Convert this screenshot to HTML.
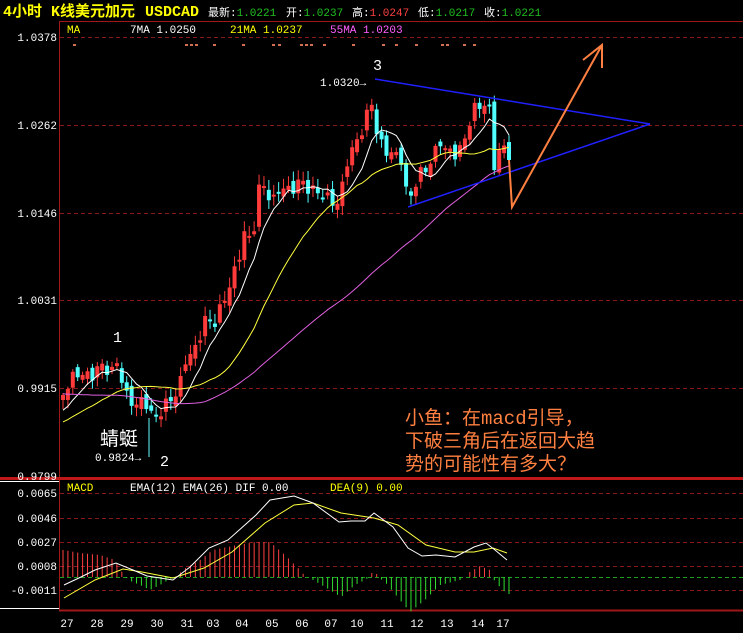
<!DOCTYPE html>
<html><head><meta charset="utf-8"><style>
html,body{margin:0;padding:0;background:#000;width:743px;height:633px;overflow:hidden}
svg{display:block}
text{font-family:"Liberation Mono","Noto Sans CJK SC",monospace}
</style></head><body>
<svg id="s" width="743" height="633" xmlns="http://www.w3.org/2000/svg">
<rect width="743" height="633" fill="#000"/>
<g id="grid"></g>
<line x1="59.5" y1="21" x2="59.5" y2="611" stroke="#a01818" stroke-width="1"/>
<line x1="59" y1="21.5" x2="743" y2="21.5" stroke="#a01818"/>
<line x1="0" y1="478.5" x2="743" y2="478.5" stroke="#c01818" stroke-width="3"/>
<line x1="59" y1="610.5" x2="743" y2="610.5" stroke="#a01818" stroke-width="2"/>
<line x1="0" y1="481.5" x2="59" y2="481.5" stroke="#fff"/>
<line x1="0" y1="608.5" x2="59" y2="608.5" stroke="#fff"/>
<g id="candles"></g>
<g id="ma"></g>
<g id="macd"></g>
<text x="3" y="16" font-family="Liberation Sans,Noto Sans CJK SC,sans-serif" font-size="15" font-weight="bold" fill="#ffff00">4小时 K线美元加元</text>
<text x="145" y="16" font-family="Liberation Sans,sans-serif" font-size="15" font-weight="bold" fill="#ffff00">USDCAD</text>
<g font-size="11">
<text x="208" y="16" fill="#fff">最新:<tspan fill="#20c020">1.0221</tspan></text>
<text x="286" y="16" fill="#fff">开:<tspan fill="#20c020">1.0237</tspan></text>
<text x="352" y="16" fill="#fff">高:<tspan fill="#ff4040">1.0247</tspan></text>
<text x="418" y="16" fill="#fff">低:<tspan fill="#20c020">1.0217</tspan></text>
<text x="484" y="16" fill="#fff">收:<tspan fill="#20c020">1.0221</tspan></text>
</g>
<g font-size="11">
<text x="67" y="33" fill="#ffff00">MA</text>
<text x="130" y="33" fill="#fff">7MA 1.0250</text>
<text x="230" y="33" fill="#ffff00">21MA 1.0237</text>
<text x="330" y="33" fill="#ff60ff">55MA 1.0203</text>
<text x="67" y="491" fill="#ffff00">MACD</text>
<text x="130" y="491" fill="#fff">EMA(12) EMA(26) DIF 0.00</text>
<text x="330" y="491" fill="#ffff00">DEA(9) 0.00</text>
</g>
<g font-size="11" fill="#fff" text-anchor="end">
<text x="57" y="41">1.0378</text><text x="57" y="129">1.0262</text><text x="57" y="217">1.0146</text>
<text x="57" y="304">1.0031</text><text x="57" y="392">0.9915</text><text x="57" y="480">0.9799</text>
<text x="57" y="497">0.0065</text><text x="57" y="522">0.0046</text><text x="57" y="546">0.0027</text>
<text x="57" y="570">0.0008</text><text x="57" y="594">-0.0011</text>
</g>
<g font-size="11" fill="#fff" text-anchor="middle">
<text x="67" y="627">27</text><text x="97" y="627">28</text><text x="127" y="627">29</text><text x="157" y="627">30</text>
<text x="187" y="627">31</text><text x="213" y="627">03</text><text x="242" y="627">04</text><text x="272" y="627">05</text>
<text x="302" y="627">06</text><text x="331" y="627">07</text><text x="357" y="627">10</text><text x="387" y="627">11</text>
<text x="417" y="627">12</text><text x="447" y="627">13</text><text x="478" y="627">14</text><text x="503" y="627">17</text>
</g>
<g fill="#fff">
<text x="113" y="342" font-family="Liberation Sans,sans-serif" font-size="15">1</text>
<text x="373" y="70" font-family="Liberation Sans,sans-serif" font-size="15">3</text>
<text x="160" y="466" font-family="Liberation Sans,sans-serif" font-size="15">2</text>
<text x="100" y="445" font-family="Noto Sans CJK SC,sans-serif" font-size="19">蜻蜓</text>
<text x="95" y="461" font-size="11">0.9824→</text>
<text x="320" y="86" font-size="11">1.0320→</text>
</g>
<line x1="149" y1="418" x2="149" y2="457" stroke="#60ffff"/>
<line x1="375" y1="79" x2="650" y2="124" stroke="#2020ff" stroke-width="1.5"/>
<line x1="408" y1="207" x2="650" y2="124" stroke="#2020ff" stroke-width="1.5"/>
<polyline points="509,160 512,207 602,45" fill="none" stroke="#ff8040" stroke-width="2"/>
<polyline points="583,60 602,45 602,68" fill="none" stroke="#ff8040" stroke-width="2"/>
<g font-family="Noto Sans CJK SC,sans-serif" font-size="19" fill="#ff8040">
<text x="405" y="424">小鱼：在macd引导，</text>
<text x="405" y="447">下破三角后在返回大趋</text>
<text x="405" y="470">势的可能性有多大？</text>
</g>
</svg>
<script>
(function(){
var NS="http://www.w3.org/2000/svg";
function el(p,t,a){var e=document.createElementNS(NS,t);for(var k in a)e.setAttribute(k,a[k]);document.getElementById(p).appendChild(e);return e;}
[37,125,213,300,388].forEach(function(y){el("grid","line",{x1:60,x2:743,y1:y+.5,y2:y+.5,stroke:"#8a1818","stroke-dasharray":"4,3"});});
[493,518,542,566,590].forEach(function(y){el("grid","line",{x1:60,x2:743,y1:y+.5,y2:y+.5,stroke:"#8a1818","stroke-dasharray":"4,3"});});
el("grid","line",{x1:60,x2:743,y1:577.5,y2:577.5,stroke:"#20a020","stroke-dasharray":"4,3"});
[73,185,190,195,213,242,272,278,300,305,310,323,352,382,395,415,441,446,463,473].forEach(function(x){el("grid","rect",{x:x,y:44,width:3,height:2,fill:"#d07050"});});
var K=[[63,395],[70,380],[80,372],[90,378],[100,365],[112,372],[118,360],[125,395],[135,405],[145,400],[150,412],[155,420],[165,405],[175,395],[180,385],[185,360],[195,350],[205,320],[215,322],[228,290],[237,265],[245,230],[252,245],[258,190],[265,185],[272,205],[280,185],[290,192],[300,180],[310,190],[318,192],[330,200],[340,205],[345,165],[355,145],[362,130],[367,115],[372,102],[378,140],[385,150],[395,155],[403,160],[407,200],[412,195],[418,175],[425,170],[432,160],[440,140],[445,150],[452,152],[458,155],[462,145],[468,130],[472,112],[478,105],[485,105],[490,112],[494,165],[500,150],[505,147],[509,160]];
function interp(L,x){if(x<=L[0][0])return L[0][1];for(var i=1;i<L.length;i++){if(x<=L[i][0]){var a=L[i-1],b=L[i];return a[1]+(b[1]-a[1])*(x-a[0])/(b[0]-a[0]);}}return L[L.length-1][1];}
var N=92,xs=[],cl=[];
for(var i=0;i<N;i++){var x=63+i*(446/91);xs.push(x);cl.push(interp(K,x)+Math.sin(i*2.3)*6);}
cl[N-1]=160;
var pre=[];for(var j=0;j<60;j++){pre.push(j<35?365:445-(j-35)*1.5);}
var all=pre.concat(cl);
for(var i=0;i<N;i++){
 var o=i==0?400:cl[i-1]+Math.sin(i*1.7)*5,c=cl[i],x=xs[i];
 var up=c<o,col=up?"#ff3a3a":"#50ffff";
 var t0=Math.min(o,c),b0=Math.max(o,c);if(b0-t0<2)b0=t0+2;
 var hw=2+Math.abs(Math.sin(i*3.1))*8,lw=2+Math.abs(Math.cos(i*2.7))*7;
 el("candles","line",{x1:x,x2:x,y1:t0-hw,y2:b0+lw,stroke:col});
 el("candles","rect",{x:x-2,y:t0,width:4,height:b0-t0,fill:col});
}
function ma(n,color){var pts=[];for(var i=0;i<N;i++){var k=i+60,s=0;for(var m=0;m<n;m++)s+=all[k-m];pts.push(xs[i].toFixed(1)+","+(s/n).toFixed(1));}
 el("ma","polyline",{points:pts.join(" "),fill:"none",stroke:color,"stroke-width":1});}
ma(7,"#ffffff");ma(21,"#ffff40");ma(55,"#e060e0");
var DIF=[[64,585],[81,577],[95,570],[116,563],[133,570],[147,576],[173,580],[190,567],[209,548],[228,540],[256,515],[270,500],[294,496],[313,503],[339,522],[351,521],[365,521],[374,513],[393,527],[408,548],[422,556],[436,555],[455,557],[474,547],[486,543],[495,550],[507,560]];
var DEA=[[64,598],[95,580],[123,569],[142,572],[173,578],[204,568],[232,552],[265,523],[294,505],[313,503],[341,513],[374,518],[398,525],[426,545],[455,552],[474,552],[493,548],[507,553]];
function pl(L,c){el("macd","polyline",{points:L.map(function(p){return p.join(",")}).join(" "),fill:"none",stroke:c});}
var H=[[64,550],[80,553],[100,555],[115,560],[122,572],[126,577],[128,580],[140,585],[150,590],[160,585],[170,579],[178,577],[182,570],[200,560],[213,550],[237,545],[256,542],[270,542],[285,555],[300,570],[305,576],[310,577],[313,580],[330,590],[341,597],[355,585],[365,580],[370,577],[374,568],[378,577],[385,582],[400,600],[410,612],[425,600],[440,585],[460,580],[465,577],[468,573],[480,566],[490,570],[493,577],[495,582],[507,594]];
for(var i=0;i<N;i++){var x=xs[i],y=interp(H,x);if(Math.abs(y-577)<1)continue;
 el("macd","line",{x1:x,x2:x,y1:577,y2:y,stroke:y<577?"#ff4040":"#30e030"});}
pl(DEA,"#ffff40");pl(DIF,"#ffffff");
})();
</script>
</body></html>
